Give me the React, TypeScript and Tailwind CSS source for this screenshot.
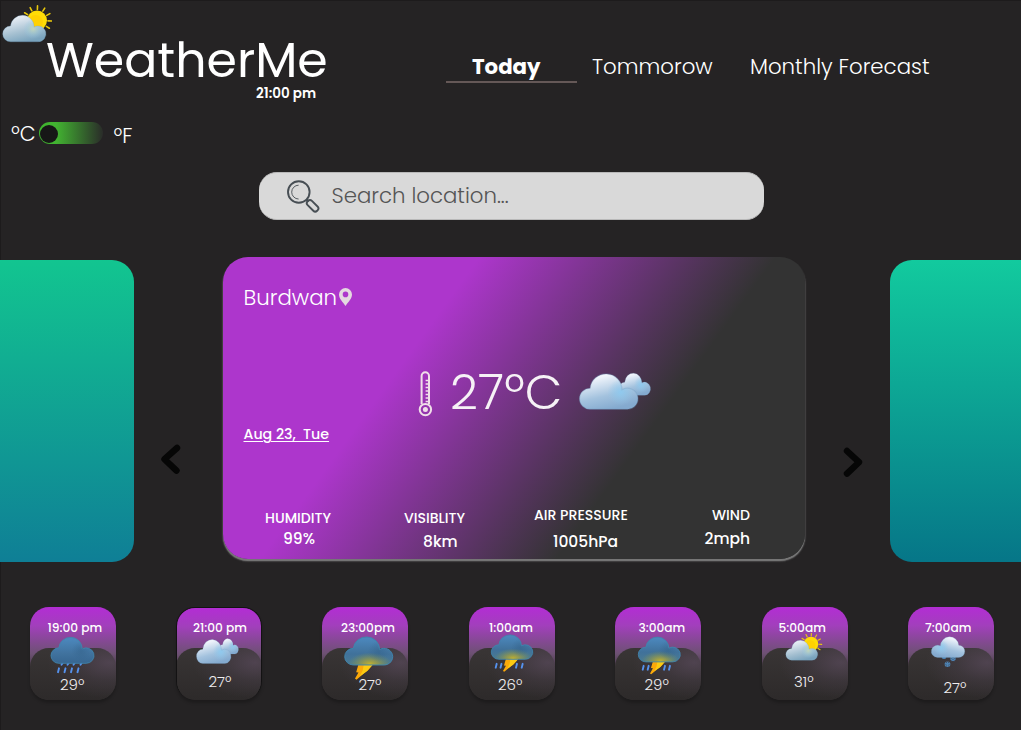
import type { ReactNode } from 'react';

type CloudTone = 'light' | 'pale' | 'dark' | 'storm';

const tones: Record<CloudTone, string[]> = {
  light: ['#f1f5fc', '#a3c2de', '#84aacf'],
  pale: ['#e6ecf4', '#a5c0d1', '#79a3bd'],
  dark: ['#4b87bc', '#41739f', '#376690'],
  storm: ['#4b87bc', '#40719a', '#4b7b92'],
};

function Cloud({ id, x, y, w, h, tone, flip }: { id: string; x: number; y: number; w: number; h: number; tone: CloudTone; flip?: boolean }) {
  const [a, b, c] = tones[tone];
  const flat = tone === 'dark' || tone === 'storm';
  const d = 'M8 28A8 8 0 0 1 8 12A12 12 0 0 1 31.95 13.1A8 8 0 1 1 36 28Z';
  return (
    <g transform={`translate(${flip ? x + w : x} ${y}) scale(${((flip ? -1 : 1) * w) / 44} ${h / 28})`}>
      <defs>
        <linearGradient id={id} x1={flat ? 22 : 17} y1="0" x2={flat ? 22 : 24} y2="28" gradientUnits="userSpaceOnUse">
          <stop offset="0.1" stopColor={a} />
          <stop offset="0.62" stopColor={b} />
          <stop offset="1" stopColor={c} />
        </linearGradient>
        <radialGradient id={id + 'g'} cx="31" cy="15" r="10" gradientUnits="userSpaceOnUse">
          <stop offset="0" stopColor={flat ? '#2f5c83' : tone === 'pale' ? '#c5d7b8' : '#8dcaf0'} stopOpacity={flat ? 0.4 : 0.9} />
          <stop offset="1" stopColor={flat ? '#2f5c83' : '#8dc6ea'} stopOpacity="0" />
        </radialGradient>
        {tone === 'storm' && (
          <radialGradient id={id + 'y'} cx="0" cy="0" r="1" gradientUnits="userSpaceOnUse" gradientTransform="translate(23 27) scale(20 11)">
            <stop offset="0" stopColor="#c9b428" stopOpacity="0.95" />
            <stop offset="0.45" stopColor="#a3a03c" stopOpacity="0.6" />
            <stop offset="1" stopColor="#7f9450" stopOpacity="0" />
          </radialGradient>
        )}
      </defs>
      <path d={d} fill={`url(#${id})`} />
      {tone === 'storm' && <path d={d} fill={`url(#${id}y)`} />}
      <path d={d} fill={`url(#${id}g)`} stroke={flat ? '#3f85ae' : '#6d9cc0'} strokeOpacity={flat ? 1 : 0.3} strokeWidth="0.9" />
    </g>
  );
}

function Sun({ cx, cy, r }: { cx: number; cy: number; r: number }) {
  return (
    <g>
      {Array.from({ length: 12 }, (_, i) => (
        <line key={i} x1={cx} x2={cx} y1={cy - r * 1.1} y2={cy - r * 1.46} stroke="#e9c80c" strokeWidth={r * 0.16} strokeLinecap="round" transform={`rotate(${i * 30 + 2} ${cx} ${cy})`} />
      ))}
      <circle cx={cx} cy={cy} r={r} fill="#ffdc06" />
      <circle cx={cx - r * 0.15} cy={cy + r * 0.2} r={r * 0.75} fill="#ffc800" opacity="0.55" />
    </g>
  );
}

function Drops({ xs, y, h }: { xs: number[]; y: number; h: number }) {
  return (
    <g stroke="#5592ee" strokeWidth="1.9" strokeLinecap="round">
      {xs.map((x) => (
        <line key={x} x1={x + 1} y1={y + 0.8} x2={x} y2={y + h - 0.8} />
      ))}
    </g>
  );
}

function Bolt({ x, y, s }: { x: number; y: number; s: number }) {
  return (
    <g transform={`translate(${x} ${y}) scale(${s})`}>
      <path d="M3.5 0H18.5L13 6.5L11.8 7L1.5 15.6L0 14.5L3.6 8.3L1.2 8Z" fill="#fba90a" />
      <path d="M9 0H18.5L12 7.2L5 12L8 6Z" fill="#fccb12" />
    </g>
  );
}

function Flake({ cx, cy, r }: { cx: number; cy: number; r: number }) {
  return (
    <g stroke="#4f86b8" strokeWidth="0.9">
      {[0, 60, 120].map((a) => (
        <g key={a} transform={`rotate(${a} ${cx} ${cy})`}>
          <line x1={cx} x2={cx} y1={cy - r} y2={cy + r} />
          <path d={`M${cx - 1} ${cy - r}L${cx} ${cy - r + 1.2}L${cx + 1} ${cy - r}M${cx - 1} ${cy + r}L${cx} ${cy + r - 1.2}L${cx + 1} ${cy + r}`} fill="none" />
        </g>
      ))}
    </g>
  );
}

type Hour = { time: string; temp: string; view: string; timePos: string; tempPos: string; shell: string; art: ReactNode };

const hours: Hour[] = [
  {
    time: '19:00 pm', temp: '29º', view: '29.5 633.5 86 49', timePos: 'pl-[18px]', tempPos: 'mt-[-7px] pl-[30.5px]', shell: 'ml-[29.5px]',
    art: (<><Drops xs={[61, 67, 73, 80]} y={663} h={3} /><Drops xs={[57.5, 64, 70.5, 77]} y={668} h={5.5} /><Cloud id="c1" x={50.5} y={636.8} w={43} h={27} tone="dark" /></>),
  },
  {
    time: '21:00 pm', temp: '27º', view: '176 633.5 86 49', timePos: 'pl-[16px]', tempPos: 'mt-[-10px] pl-[31.5px]', shell: 'ml-[60.5px]',
    art: (<><Cloud id="c2b" x={219} y={638.5} w={19.5} h={16} tone="light" /><Cloud id="c2" x={196.5} y={639} w={34.5} h={25} tone="light" /></>),
  },
  {
    time: '23:00pm', temp: '27º', view: '322 633.5 86 49', timePos: 'pl-[19px]', tempPos: 'mt-[-7px] pl-[36.5px]', shell: 'ml-[60px]',
    art: (<><Bolt x={355} y={665} s={0.97} /><Cloud id="c3" x={344.7} y={636.3} w={48} h={29.2} tone="storm" /></>),
  },
  {
    time: '1:00am', temp: '26º', view: '469 633.5 86 49', timePos: 'pl-[20px]', tempPos: 'mt-[-7px] pl-[29px]', shell: 'ml-[61px]',
    art: (<><Drops xs={[495.7, 500.5, 516, 521.7]} y={663.5} h={5.5} /><Bolt x={503} y={659.5} s={0.82} /><Cloud id="c4" x={491.3} y={634.4} w={41.5} h={25.4} tone="storm" /></>),
  },
  {
    time: '3:00am', temp: '29º', view: '615 633.5 86 49', timePos: 'pl-[23.5px]', tempPos: 'mt-[-7.5px] pl-[29.5px]', shell: 'ml-[60px]',
    art: (<><Drops xs={[642.7, 647.7, 664, 669]} y={665.5} h={5.5} /><Bolt x={650} y={662} s={0.82} /><Cloud id="c5" x={638.3} y={636.6} w={42} h={25.8} tone="storm" /></>),
  },
  {
    time: '5:00am', temp: '31º', view: '761.5 633.5 86 49', timePos: 'pl-[17px]', tempPos: 'mt-[-10px] pl-[32.5px]', shell: 'ml-[60.5px]',
    art: (<><Sun cx={810.5} cy={644.5} r={7.3} /><Cloud id="c6" x={785.3} y={640} w={32} h={20.8} tone="pale" /></>),
  },
  {
    time: '7:00am', temp: '27º', view: '908 633.5 86 49', timePos: 'pl-[17px]', tempPos: 'mt-[-4px] pl-[35.5px]', shell: 'ml-[60.5px]',
    art: (<><Flake cx={953} cy={659} r={2.6} /><Flake cx={944} cy={657.5} r={2} /><Flake cx={947.5} cy={664.8} r={2.7} /><Cloud id="c7" x={931.3} y={636.5} w={33.5} h={21.5} tone="light" flip /></>),
  },
];

function HourCard({ hour, active }: { hour: Hour; active: boolean }) {
  return (
    <div className={`relative isolate flex h-[93.5px] w-[86px] shrink-0 flex-col overflow-hidden rounded-[19px] bg-[linear-gradient(180deg,#b32dd4_0%,#a23fbc_20%,#6d5173_50%,#332f30_72%)] ${active ? 'border-x border-t border-b-0 border-[#131213] pt-[10px]' : 'pt-[11px]'}`}>
      <div className={`absolute -z-10 h-[52px] rounded-[19px] bg-[radial-gradient(ellipse_62px_36px_at_92%_28%,rgba(88,73,90,0.75)_0%,rgba(76,65,77,0.4)_50%,rgba(56,51,52,0)_100%),linear-gradient(180deg,#393535,#2d2a2a)] ${active ? '-inset-x-px top-[40.5px]' : 'inset-x-0 top-[41.5px]'}`} />
      <div className={`h-5 text-[12.2px] font-medium leading-5 ${hour.timePos}`}>{hour.time}</div>
      <svg className={`mt-[-4.5px] block h-[49px] w-[86px] shrink-0 ${active ? '-ml-px' : ''}`} viewBox={hour.view}>{hour.art}</svg>
      <div className={`h-5 text-[15px] font-light leading-5 text-[#f0eef0] ${hour.tempPos}`}>{hour.temp}</div>
    </div>
  );
}

function Stat({ label, value, className, valueClass }: { label: string; value: string; className: string; valueClass: string }) {
  return (
    <div className={`flex shrink-0 flex-col ${className}`}>
      <span className="text-[14.1px] leading-5">{label}</span>
      <span className={`text-[15.5px] leading-5 ${valueClass}`}>{value}</span>
    </div>
  );
}

export default function App() {
  return (
    <main className="flex h-[730px] w-[1021px] flex-col overflow-hidden whitespace-pre bg-[#252324] font-['Poppins','Inter',sans-serif] text-white antialiased shadow-[inset_1px_1px_0_#1d1b1c]">
      <header className="flex h-[104px] shrink-0">
        <svg className="h-[52px] w-[52px] shrink-0" viewBox="0 0 52 52">
          <Sun cx={37} cy={20.5} r={10} />
          <Cloud id="logo" x={2.7} y={14.2} w={43.3} h={27.6} tone="pale" />
        </svg>
        <div className="-ml-[6px] flex w-[400px] shrink-0 flex-col pt-[33px]">
          <h1 className="h-[54px] text-[49px] font-normal leading-[54px]">WeatherMe</h1>
          <span className="-mt-[3px] pl-[210px] text-[13.5px] font-semibold leading-5">21:00 pm</span>
        </div>
        <nav className="flex pt-[52px] text-[21.3px] font-light leading-[30px]">
          <a className="h-[31px] w-[131px] border-b-2 border-[#655857] pl-[26px] font-bold">Today</a>
          <a className="ml-[15px] w-[121px]">Tommorow</a>
          <a className="ml-[37px]">Monthly Forecast</a>
        </nav>
      </header>

      <div className="flex h-[68.5px] shrink-0 pl-[11px] text-[20.6px] font-light">
        <span className="w-[28px] pt-[14.5px] leading-[30px]">ºC</span>
        <div className="mt-[18px] flex h-[22px] w-[64px] items-center rounded-full bg-[linear-gradient(90deg,#3fb62e_0%,#42b331_27%,#2a2c29_100%)]">
          <div className="ml-px mt-px h-[18px] w-[18px] rounded-full bg-[#171717]" />
        </div>
        <span className="ml-[10.5px] pt-[16.5px] leading-[30px]">ºF</span>
      </div>

      <label className="-mt-[0.5px] ml-[259px] flex h-[47.5px] w-[505px] shrink-0 items-center rounded-[18px] border-y border-[#b9b9b9] bg-[#d9d9d9]">
        <svg className="ml-[28px] mt-[2px] h-[34px] w-[34px]" viewBox="0 0 34 34" fill="none" stroke="#474e54">
          <circle cx="11.8" cy="12" r="10.8" strokeWidth="1.9" />
          <path d="M11.6 5.2a6.9 6.9 0 0 0 0 13.8" strokeWidth="0.9" />
          <path d="M19.6 19.6l2 2" strokeWidth="2.6" />
          <rect x="-3" y="-6.7" width="6" height="13.4" rx="2.7" strokeWidth="1.9" transform="translate(25.6 25.8) rotate(-45)" />
        </svg>
        <span className="ml-[10.5px] mt-px text-[21.3px] font-light leading-[30px] text-[#555]">Search location...</span>
      </label>

      <section className="mt-[37.5px] flex h-[305px] shrink-0">
        <div className="mt-[3px] h-[301.5px] w-[134px] shrink-0 rounded-r-[22px] bg-[linear-gradient(180deg,#12c590_0%,#0f7f96_100%)]" />
        <svg className="ml-[26px] mt-[184.5px] h-[34px] w-[22px] shrink-0" viewBox="0 0 22 34" fill="none" stroke="#060606" strokeWidth="6.4" strokeLinecap="round" strokeLinejoin="round">
          <path d="M17 6L4.5 17.2L16.5 28.6" />
        </svg>

        <article className="ml-[41px] flex h-[302px] w-[582px] shrink-0 flex-col rounded-[25px] bg-[linear-gradient(126deg,#ad36cc_32%,#333333_69%)] shadow-[0_2px_2px_#777777,0_2px_1px_#777777]">
          <div className="mt-[26px] flex h-[30px] pl-[20.5px]">
            <span className="w-[95.5px] text-[21.3px] font-light leading-[30px]">Burdwan</span>
            <svg className="mt-[5px] h-[18px] w-[13px]" viewBox="0 0 13 18">
              <path fillRule="evenodd" fill="#e4d8e0" d="M6.5 0A6.5 6.5 0 0 1 13 6.5C13 10.6 9.2 14 6.5 18C3.8 14 0 10.6 0 6.5A6.5 6.5 0 0 1 6.5 0ZM6.5 3.6A2.8 2.8 0 1 0 6.5 9.2A2.8 2.8 0 1 0 6.5 3.6Z" />
            </svg>
          </div>

          <div className="mt-[54px] flex h-[50px] pl-[195px]">
            <svg className="mt-[4px] h-[46px] w-[16px]" viewBox="0 0 16 46" fill="none" stroke="#f0dfe9">
              <path d="M3.6 33V5a3.7 3.7 0 0 1 7.4 0V33" strokeWidth="2" />
              <path d="M7.6 9.5h3.5M7.6 13h3.5M7.6 16.5h3.5M7.6 20h3.5M7.6 23.5h3.5M7.6 27h3.5M7.6 30.5h3.5" strokeWidth="1.4" />
              <circle cx="7.4" cy="38.6" r="5.7" strokeWidth="2" />
              <circle cx="7.4" cy="38.6" r="2.5" fill="#f0dfe9" stroke="none" />
            </svg>
            <span className="ml-[16px] w-[126px] text-[48.8px] font-light leading-[50px] text-[#f6f2f6]">27ºC</span>
            <svg className="ml-[2px] mt-[4px] h-[42px] w-[76px]" viewBox="578 371.5 76 42">
              <Cloud id="mainBack" x={619} y={372.8} w={31.5} h={23} tone="light" />
              <Cloud id="mainFront" x={579.5} y={373} w={58.5} h={36.7} tone="light" />
            </svg>
          </div>

          <div className="mt-[7px] pl-[20.5px] text-[14.2px] font-medium leading-5 underline decoration-1 underline-offset-[2px]">Aug 23,  Tue</div>

          <div className="mt-[61px] flex items-start font-medium">
            <Stat label="HUMIDITY" value="99%" className="mt-[3px] ml-[42px] w-[139px]" valueClass="mt-[1px] pl-[18px]" />
            <Stat label="VISIBLITY" value="8km" className="mt-[3px] w-[130px]" valueClass="mt-[4px] pl-[19px]" />
            <Stat label="AIR PRESSURE" value="1005hPa" className="w-[171px]" valueClass="mt-[7px] pl-[19px]" />
            <Stat label="WIND" value="2mph" className="w-[60px] pl-[7px]" valueClass="mt-[4px] -ml-[7.5px]" />
          </div>
        </article>

        <svg className="ml-[37px] mt-[188px] h-[34px] w-[22px] shrink-0" viewBox="0 0 22 34" fill="none" stroke="#060606" strokeWidth="6.4" strokeLinecap="round" strokeLinejoin="round">
          <path d="M5 6L17 17.2L5 28.6" />
        </svg>
        <div className="ml-[25.5px] mt-[3px] h-[301.5px] w-[131.5px] shrink-0 rounded-l-[22px] bg-[linear-gradient(180deg,#12ca9e_0%,#067688_100%)]" />
      </section>

      <section className="mt-[44.5px] flex shrink-0">
        {hours.map((hour, i) => (
          <div key={hour.time} className={`h-[93.5px] w-[86px] shrink-0 rounded-[19px] shadow-[0_3px_3px_rgba(0,0,0,0.22)] ${hour.shell}`}>
            <HourCard hour={hour} active={i === 1} />
          </div>
        ))}
      </section>
    </main>
  );
}
